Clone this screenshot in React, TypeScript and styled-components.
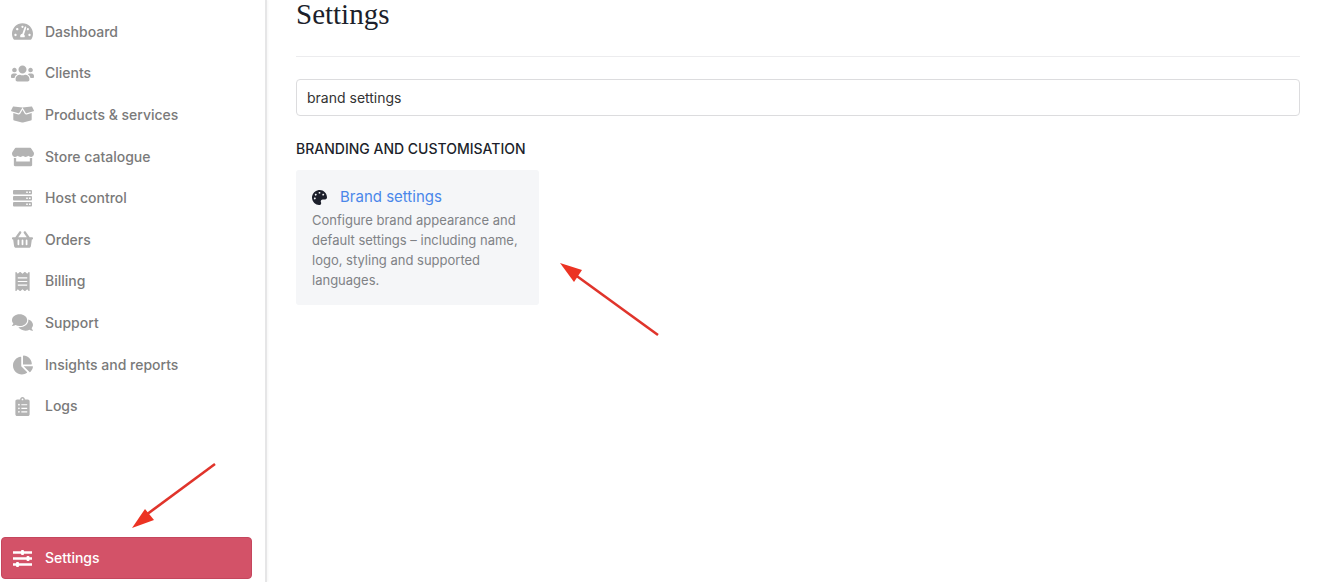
import React from "react";
import styled, { createGlobalStyle } from "styled-components";
import {
  FaBoxOpen,
  FaChartPie,
  FaClipboardList,
  FaComments,
  FaPalette,
  FaReceipt,
  FaShoppingBasket,
  FaStore,
  FaTachometerAlt,
  FaUsers,
} from "react-icons/fa";

const GlobalStyle = createGlobalStyle`
  * { box-sizing: border-box; }
  body {
    margin: 0;
    background: #ffffff;
    font-family: Inter, "Liberation Sans", sans-serif;
    color: #1c1f2b;
  }
`;

const Page = styled.div`
  position: relative;
  display: flex;
  min-height: 100vh;
`;

const Sidebar = styled.nav`
  flex: 0 0 267px;
  display: flex;
  flex-direction: column;
  justify-content: space-between;
  padding: 11px 13px 3px 1px;
  border-right: 2px solid #e6e6e7;
  box-shadow: 1px 0 2px rgba(0, 0, 0, 0.04);
`;

const NavList = styled.ul`
  display: grid;
  grid-auto-rows: 1fr;
  min-height: 416px;
  margin: 0;
  padding: 0;
  list-style: none;
`;

const NavLink = styled.a<{ $active?: boolean }>`
  display: flex;
  align-items: center;
  gap: 11px;
  height: ${(p) => (p.$active ? "42px" : "100%")};
  padding: 0 9px;
  border: 1px solid ${(p) => (p.$active ? "#c5465d" : "transparent")};
  border-radius: 4px;
  background: ${(p) => (p.$active ? "#d35268" : "transparent")};
  color: ${(p) => (p.$active ? "#ffffff" : "#7a7a7a")};
  font-size: 14px;
  font-weight: 500;
  line-height: 20px;
  text-decoration: none;
`;

const NavIcon = styled.span<{ $active?: boolean }>`
  display: flex;
  flex: 0 0 23px;
  justify-content: center;
  color: ${(p) => (p.$active ? "#ffffff" : "#b3b3b3")};

  svg {
    flex: none;
  }
`;

const Main = styled.main`
  flex: 1;
  min-width: 0;
  padding: 0 24px 24px 29px;
`;

const Title = styled.h1`
  margin: 0;
  padding: 0 0 28px;
  border-bottom: 1px solid #ececee;
  font-family: "Liberation Serif", serif;
  font-size: 29px;
  font-weight: 400;
  line-height: 28px;
`;

const SearchInput = styled.input`
  display: block;
  width: 100%;
  height: 37px;
  margin-top: 22px;
  padding: 0 10px;
  border: 1px solid #dcdcde;
  border-radius: 4px;
  background: #ffffff;
  color: #333333;
  font-family: inherit;
  font-size: 14px;
  outline: none;
`;

const SectionTitle = styled.h2`
  margin: 23px 0 11px;
  font-size: 14px;
  font-weight: 500;
  line-height: 20px;
  text-transform: uppercase;
`;

const Card = styled.article`
  width: 243px;
  padding: 16px 16px 15px;
  border-radius: 3px;
  background: #f5f6f8;
`;

const CardHeading = styled.h3`
  display: flex;
  align-items: center;
  gap: 13px;
  margin: 0 0 2px;
  font-size: 15px;
  font-weight: 400;
  line-height: 22px;

  a {
    color: #4a87ea;
    text-decoration: none;
  }
`;

const CardText = styled.p`
  margin: 0;
  color: #808286;
  font-size: 13px;
  line-height: 20px;
`;

const Arrow = styled.svg<{ $left: number; $top: number }>`
  position: absolute;
  left: ${(p) => p.$left}px;
  top: ${(p) => p.$top}px;
  pointer-events: none;
`;

type IconProps = { size?: number };

function ServerIcon({ size = 19 }: IconProps) {
  return (
    <svg width={size} height={size} viewBox="0 0 19 19" fill="currentColor" aria-hidden>
      {[1, 7, 13].map((y) => (
        <g key={y}>
          <rect x="0" y={y} width="19" height="4.6" rx="1" />
          <path d={`M13.2 ${y + 1.5}h1.6v1.6h-1.6zM16 ${y + 1.5}h1.6v1.6h-1.6z`} fill="#ffffff" />
        </g>
      ))}
    </svg>
  );
}

function SlidersIcon({ size = 19 }: IconProps) {
  return (
    <svg width={size} height={size} viewBox="0 0 19 19" fill="currentColor" aria-hidden>
      <path d="M0 2.2h19v2.6H0zM0 8.2h19v2.6H0zM0 14.2h19v2.6H0z" />
      <rect x="8" y="1" width="3" height="5" rx="1" />
      <rect x="13.5" y="7" width="3" height="5" rx="1" />
      <rect x="3" y="13" width="3" height="5" rx="1" />
    </svg>
  );
}

const items: { label: string; icon: React.ComponentType<IconProps>; size: number }[] = [
  { label: "Dashboard", icon: FaTachometerAlt, size: 21 },
  { label: "Clients", icon: FaUsers, size: 23 },
  { label: "Products & services", icon: FaBoxOpen, size: 23 },
  { label: "Store catalogue", icon: FaStore, size: 22 },
  { label: "Host control", icon: ServerIcon, size: 19 },
  { label: "Orders", icon: FaShoppingBasket, size: 21 },
  { label: "Billing", icon: FaReceipt, size: 19 },
  { label: "Support", icon: FaComments, size: 21 },
  { label: "Insights and reports", icon: FaChartPie, size: 20 },
  { label: "Logs", icon: FaClipboardList, size: 19 },
];

export default function App() {
  return (
    <Page>
      <GlobalStyle />
      <Sidebar aria-label="Main">
        <NavList>
          {items.map(({ label, icon: Icon, size }) => (
            <li key={label}>
              <NavLink href="#">
                <NavIcon aria-hidden>
                  <Icon size={size} />
                </NavIcon>
                {label}
              </NavLink>
            </li>
          ))}
        </NavList>
        <NavLink href="#" $active aria-current="page">
          <NavIcon $active aria-hidden>
            <SlidersIcon />
          </NavIcon>
          Settings
        </NavLink>
      </Sidebar>
      <Main>
        <Title>Settings</Title>
        <SearchInput type="text" aria-label="Search settings" defaultValue="brand settings" />
        <SectionTitle>Branding and customisation</SectionTitle>
        <Card>
          <CardHeading>
            <FaPalette aria-hidden />
            <a href="#">Brand settings</a>
          </CardHeading>
          <CardText>
            Configure brand appearance and default settings – including name, logo, styling and
            supported languages.
          </CardText>
        </Card>
      </Main>
      <Arrow $left={130} $top={460} width="90" height="70" viewBox="0 0 90 70" aria-hidden>
        <path d="M85 4L16 55" stroke="#e0342b" strokeWidth="2.6" />
        <path d="M2 68L15 49L24 60Z" fill="#ec3323" />
      </Arrow>
      <Arrow $left={558} $top={260} width="104" height="80" viewBox="0 0 104 80" aria-hidden>
        <path d="M100 75L16 14" stroke="#e0342b" strokeWidth="2.6" />
        <path d="M2 3L24 10L16 22Z" fill="#ec3323" />
      </Arrow>
    </Page>
  );
}
